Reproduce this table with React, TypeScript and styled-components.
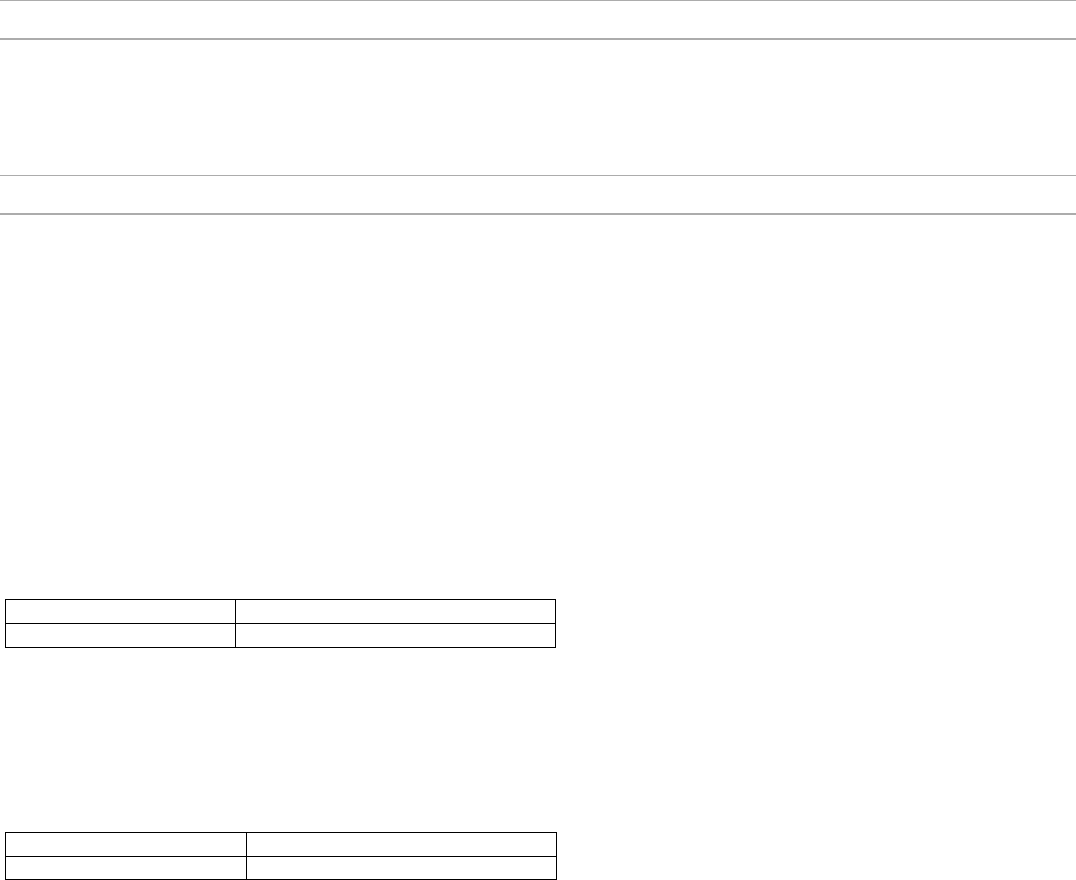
import React from "react";
import styled, { createGlobalStyle } from "styled-components";

const Global = createGlobalStyle`
  html, body { margin: 0; padding: 0; background: #ffffff; }
  body { font-family: "Liberation Sans", Arial, sans-serif; font-size: 14px; color: #000; }
`;

const Page = styled.div`
  display: flex;
  flex-direction: column;
  width: 100%;
`;

const Band = styled.div<{ $gapAfter: number }>`
  height: 37px;
  border-top: 1px solid #acacac;
  border-bottom: 2px solid #acacac;
  margin-bottom: ${(p) => p.$gapAfter}px;
`;

const Table = styled.table<{ $gapAfter: number; $width: number }>`
  border-collapse: collapse;
  width: ${(p) => p.$width}px;
  margin-left: 5px;
  margin-bottom: ${(p) => p.$gapAfter}px;
  table-layout: fixed;
`;

const Cell = styled.td<{ $w?: number }>`
  border: 1px solid #000;
  padding: 0;
  box-sizing: border-box;
  ${(p) => (p.$w ? `width: ${p.$w}px;` : "")}
`;

const Row = styled.tr<{ $h: number }>`
  height: ${(p) => p.$h}px;
`;

function InfoTable({
  firstCol,
  gapAfter,
  width,
  lastRow,
}: {
  firstCol: number;
  gapAfter: number;
  width: number;
  lastRow: number;
}) {
  return (
    <Table $gapAfter={gapAfter} $width={width}>
      <tbody>
        <Row $h={24}>
          <Cell $w={firstCol} />
          <Cell />
        </Row>
        <Row $h={lastRow}>
          <Cell $w={firstCol} />
          <Cell />
        </Row>
      </tbody>
    </Table>
  );
}

export default function App() {
  return (
    <>
      <Global />
      <Page>
        <Band $gapAfter={135} />
        <Band $gapAfter={384} />
        <InfoTable firstCol={230} gapAfter={184} width={551} lastRow={24} />
        <InfoTable firstCol={241} gapAfter={0} width={552} lastRow={23} />
      </Page>
    </>
  );
}
